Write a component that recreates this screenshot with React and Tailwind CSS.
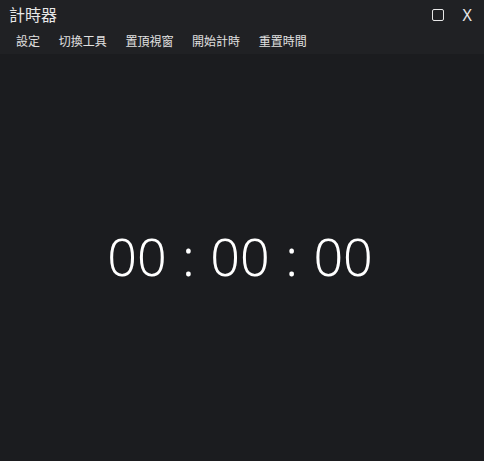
import React from 'react';

const menuItems = ['設定', '切換工具', '置頂視窗', '開始計時', '重置時間'];

function TitleBar() {
  return (
    <div className="flex h-[30px] items-center justify-between pl-[9px] pr-[12px]">
      <span className="text-[16px] leading-none text-[#e8e8e8]">計時器</span>
      <div className="flex items-center gap-[19px]">
        <span className="block h-[12px] w-[12px] rounded-[2px] border-[1.5px] border-[#e8e8e8]" />
        <span className="text-[16px] leading-none text-[#e8e8e8]">X</span>
      </div>
    </div>
  );
}

function MenuBar() {
  return (
    <div className="flex h-[24px] items-center gap-[18.7px] pl-[16px]">
      {menuItems.map((item) => (
        <span key={item} className="text-[12px] leading-none text-[#e0e0e0]">
          {item}
        </span>
      ))}
    </div>
  );
}

export default function App() {
  return (
    <div
      className="flex h-[461px] w-[484px] flex-col bg-[#1b1c1f]"
      style={{ fontFamily: '"Noto Sans", "Noto Sans CJK TC", sans-serif' }}
    >
      <div className="bg-[#202124]">
        <TitleBar />
        <MenuBar />
      </div>
      <div className="flex flex-1 items-center justify-center pb-[4px] pr-[4px]">
        <span className="text-[52px] font-light leading-none text-white [word-spacing:2px]">
          00 : 00 : 00
        </span>
      </div>
    </div>
  );
}
